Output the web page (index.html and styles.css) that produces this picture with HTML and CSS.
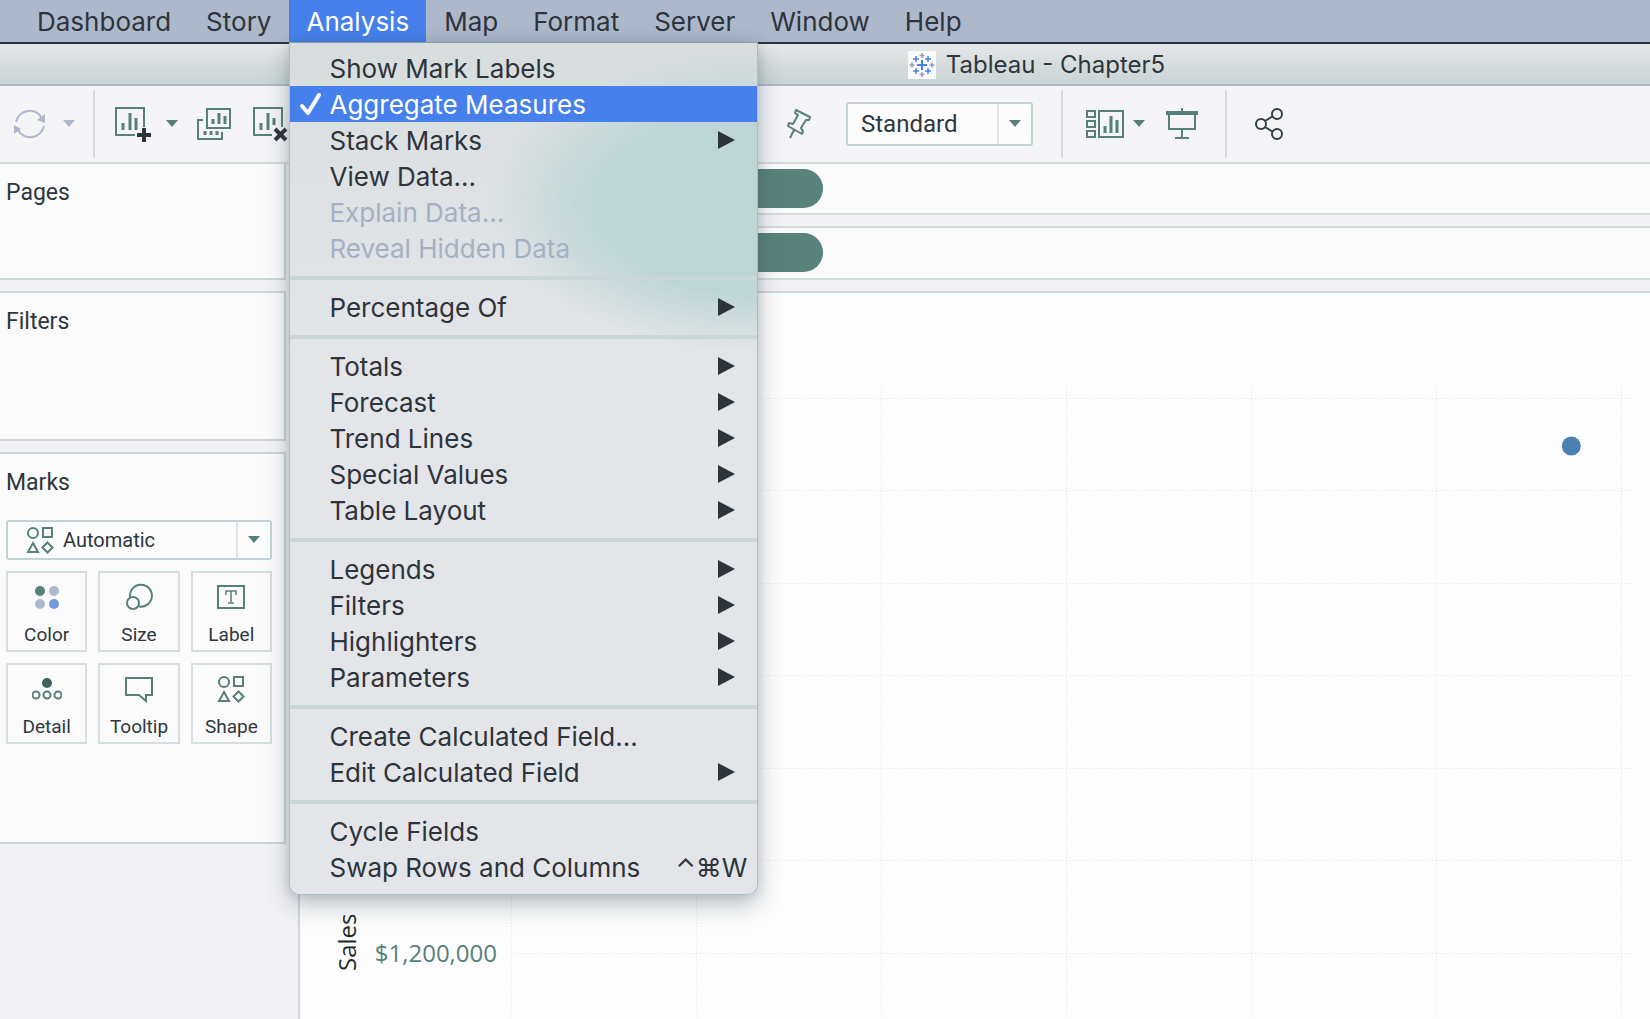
FILE: index.html
```html
<!DOCTYPE html>
<html lang="en">
<head>
<meta charset="utf-8">
<title>Tableau - Chapter5</title>
<link rel="stylesheet" href="styles.css">
</head>
<body>
<svg class="defs" aria-hidden="true">
  <symbol id="caret" viewBox="0 0 12 8"><path d="M0 0h12L6 7z" fill="currentColor"/></symbol>
  <symbol id="arrow" viewBox="0 0 18 18"><path d="M0 0l17 9-17 9z" fill="currentColor"/></symbol>
  <symbol id="shapes" viewBox="0 0 28 28">
    <g fill="none" stroke="currentColor" stroke-width="2">
      <circle cx="7" cy="7" r="5"/><rect x="17" y="2" width="9" height="9"/>
      <path d="M7 17l5 9H2z"/><path d="M21.500 16.500l5 5-5 5-5-5z"/>
    </g>
  </symbol>
</svg>

<nav class="menubar" aria-label="Application menu">
  <button class="menubar-item">Dashboard</button>
  <button class="menubar-item">Story</button>
  <div class="menubar-group">
    <button class="menubar-item is-open" aria-expanded="true">Analysis</button>
    <div class="menu" role="menu">
      <button class="menu-item" role="menuitem">Show Mark Labels</button>
      <button class="menu-item is-active" role="menuitemcheckbox" aria-checked="true"><svg class="check" viewBox="0 0 22 22" aria-hidden="true"><path d="M2 13l6 7L19 2" fill="none" stroke="currentColor" stroke-width="4" stroke-linecap="round" stroke-linejoin="round"/></svg>Aggregate Measures</button>
      <button class="menu-item" role="menuitem">Stack Marks<svg class="arrow"><use href="#arrow"/></svg></button>
      <button class="menu-item" role="menuitem">View Data...</button>
      <button class="menu-item" role="menuitem" disabled>Explain Data...</button>
      <button class="menu-item" role="menuitem" disabled>Reveal Hidden Data</button>
      <hr class="menu-rule">
      <button class="menu-item" role="menuitem">Percentage Of<svg class="arrow"><use href="#arrow"/></svg></button>
      <hr class="menu-rule">
      <button class="menu-item" role="menuitem">Totals<svg class="arrow"><use href="#arrow"/></svg></button>
      <button class="menu-item" role="menuitem">Forecast<svg class="arrow"><use href="#arrow"/></svg></button>
      <button class="menu-item" role="menuitem">Trend Lines<svg class="arrow"><use href="#arrow"/></svg></button>
      <button class="menu-item" role="menuitem">Special Values<svg class="arrow"><use href="#arrow"/></svg></button>
      <button class="menu-item" role="menuitem">Table Layout<svg class="arrow"><use href="#arrow"/></svg></button>
      <hr class="menu-rule">
      <button class="menu-item" role="menuitem">Legends<svg class="arrow"><use href="#arrow"/></svg></button>
      <button class="menu-item" role="menuitem">Filters<svg class="arrow"><use href="#arrow"/></svg></button>
      <button class="menu-item" role="menuitem">Highlighters<svg class="arrow"><use href="#arrow"/></svg></button>
      <button class="menu-item" role="menuitem">Parameters<svg class="arrow"><use href="#arrow"/></svg></button>
      <hr class="menu-rule">
      <button class="menu-item" role="menuitem">Create Calculated Field...</button>
      <button class="menu-item" role="menuitem">Edit Calculated Field<svg class="arrow"><use href="#arrow"/></svg></button>
      <hr class="menu-rule">
      <button class="menu-item" role="menuitem">Cycle Fields</button>
      <button class="menu-item" role="menuitem">Swap Rows and Columns<span class="shortcut">⌃⌘W</span></button>
    </div>
  </div>
  <button class="menubar-item">Map</button>
  <button class="menubar-item">Format</button>
  <button class="menubar-item">Server</button>
  <button class="menubar-item">Window</button>
  <button class="menubar-item">Help</button>
</nav>

<header class="titlebar">
  <svg class="logo" viewBox="0 0 28 28" aria-hidden="true">
    <rect width="28" height="28" fill="#fcfcfd"/>
    <g fill="none" stroke="#4680ee" stroke-width="2"><path d="M14 9v10M9 14h10"/><path d="M8 5v6M5 8h6M20 5v6M17 8h6M8 17v6M5 20h6M20 17v6M17 20h6" stroke-width="1.500"/></g>
    <path d="M14 2v5M11.500 4.500h5M14 21v5M11.500 23.500h5M4 11.500v5M1.500 14h5M24 11.500v5M21.500 14h5" fill="none" stroke="#8d9cb8" stroke-width="1.500"/>
  </svg>
  <h1 class="title">Tableau - Chapter5</h1>
</header>

<div class="toolbar" role="toolbar" aria-label="Worksheet">
  <div class="tools tools-sheet">
    <button class="tool tool-refresh is-muted" aria-label="Refresh">
      <svg width="34" height="34" viewBox="0 0 34 34"><g fill="none" stroke="currentColor" stroke-width="2"><path d="M3 15A14 14 0 0 1 29 11"/><path d="M31 19A14 14 0 0 1 5 23"/></g><path d="M32 7v9l-8-3zM1 27v-9l7 4z" fill="currentColor"/></svg>
    </button>
    <button class="tool tool-caret is-muted" aria-label="Refresh options"><svg width="12" height="8"><use href="#caret"/></svg></button>
    <span class="divider"></span>
    <button class="tool tool-new" aria-label="New worksheet">
      <svg width="38" height="36" viewBox="0 0 38 36"><path d="M21 29H2V2h28v19" fill="none" stroke="currentColor" stroke-width="2"/><path d="M9 24v-7M16 24V7M22 24V12" fill="none" stroke="currentColor" stroke-width="3"/><path d="M30 22v14M23 29h14" fill="none" stroke="#2e343c" stroke-width="4"/></svg>
    </button>
    <button class="tool tool-caret" aria-label="New options"><svg width="12" height="8"><use href="#caret"/></svg></button>
    <button class="tool tool-duplicate" aria-label="Duplicate">
      <svg width="36" height="34" viewBox="0 0 36 34"><g fill="none" stroke="currentColor"><path d="M11 2h23v19H11zM7 13H2v19h24v-7" stroke-width="2"/><path d="M17 17v-5M23 17V6M29 17V9" stroke-width="3"/><path d="M9 24v4M15 24v4M21 24v4" stroke-width="3"/></g></svg>
    </button>
    <button class="tool" aria-label="Clear sheet">
      <svg width="36" height="36" viewBox="0 0 36 36"><path d="M20 29H2V2h28v19" fill="none" stroke="currentColor" stroke-width="2"/><path d="M9 24v-7M16 24V7M22 19V12" fill="none" stroke="currentColor" stroke-width="3"/><path d="M23 23l11 11M34 23L23 34" fill="none" stroke="#2e343c" stroke-width="4"/></svg>
    </button>
  </div>
  <div class="tools">
    <button class="tool tool-pin" aria-label="Fix axes">
      <svg width="26" height="32" viewBox="0 0 26 32"><path d="M10 2l14 7-1 3h-3l-5 8 2 3-1 3L2 18l1-3 4 1 5-9-3-2zM8 22l-4 8" fill="none" stroke="currentColor" stroke-width="2" stroke-linejoin="round"/></svg>
    </button>
    <label class="picker picker-fit">
      <select class="picker-select" aria-label="Fit"><option>Standard</option></select>
      <span class="picker-arrow"><svg width="12" height="8"><use href="#caret"/></svg></span>
    </label>
    <span class="divider"></span>
    <button class="tool tool-cards" aria-label="Show cards">
      <svg width="38" height="30" viewBox="0 0 38 30"><g fill="none" stroke="currentColor"><path d="M1 2h8v6H1zM1 12h8v6H1zM1 22h8v6H1zM13 2h24v26H13z" stroke-width="2"/><path d="M19 24v-7M25 24V7M31 24V11" stroke-width="3"/></g></svg>
    </button>
    <button class="tool tool-caret" aria-label="Card options"><svg width="12" height="8"><use href="#caret"/></svg></button>
    <button class="tool tool-present" aria-label="Presentation mode">
      <svg width="34" height="32" viewBox="0 0 34 32"><g fill="none" stroke="currentColor"><path d="M17 0v4M4 6v15h26V6M17 21v9M10 30h14" stroke-width="2"/><path d="M1 5h32" stroke-width="4"/></g></svg>
    </button>
    <span class="divider"></span>
    <button class="tool tool-share" aria-label="Share">
      <svg width="28" height="32" viewBox="0 0 28 32"><g fill="none" stroke="#2d4146" stroke-width="2"><circle cx="6" cy="16" r="5"/><circle cx="22" cy="6" r="5"/><circle cx="22" cy="26" r="5"/><path d="M10 13l8-5M10 19l8 5"/></g></svg>
    </button>
  </div>
</div>

<main class="workspace">
  <aside class="sidebar">
    <section class="card card-pages"><h2 class="card-title">Pages</h2></section>
    <section class="card card-filters"><h2 class="card-title">Filters</h2></section>
    <section class="card card-marks">
      <h2 class="card-title">Marks</h2>
      <label class="picker picker-mark">
        <svg width="28" height="28" class="picker-icon"><use href="#shapes"/></svg>
        <select class="picker-select" aria-label="Mark type"><option>Automatic</option></select>
        <span class="picker-arrow"><svg width="12" height="8"><use href="#caret"/></svg></span>
      </label>
      <div class="marks">
        <button class="mark"><svg width="28" height="28" viewBox="0 0 28 28"><circle cx="7" cy="8" r="5" fill="#56817a"/><circle cx="21" cy="8" r="5" fill="#adb8cc"/><circle cx="7" cy="21" r="5" fill="#adb8cc"/><circle cx="21" cy="21" r="5" fill="#7398db"/></svg>Color</button>
        <button class="mark"><svg width="28" height="28" viewBox="0 0 28 28"><g fill="none" stroke="currentColor" stroke-width="2"><path d="M5 14A11 11 0 1 1 14 23.500"/><circle cx="8" cy="20" r="6"/></g></svg>Size</button>
        <button class="mark"><svg width="28" height="28" viewBox="0 0 28 28"><path d="M1 3h26v22H1z" fill="none" stroke="currentColor" stroke-width="2"/><path d="M9 12V8h10v4M14 8v12M11 20h6" fill="none" stroke="currentColor" stroke-width="1.500"/></svg>Label</button>
        <button class="mark"><svg width="30" height="28" viewBox="0 0 30 28"><circle cx="15" cy="8" r="5" fill="#3f625f"/><g fill="none" stroke="currentColor" stroke-width="2"><circle cx="4" cy="20" r="3.500"/><circle cx="15" cy="20" r="3.500"/><circle cx="26" cy="20" r="3.500"/></g></svg>Detail</button>
        <button class="mark"><svg width="28" height="28" viewBox="0 0 28 28"><path d="M1 3h26v17h-6v6l-7-6H1z" fill="none" stroke="currentColor" stroke-width="2"/></svg>Tooltip</button>
        <button class="mark"><svg width="28" height="28"><use href="#shapes"/></svg>Shape</button>
      </div>
    </section>
  </aside>

  <div class="canvas">
    <div class="shelf"><span class="pill"></span></div>
    <div class="shelf"><span class="pill"></span></div>
    <section class="sheet">
      <div class="axis">
        <span class="axis-title">Sales</span>
        <span class="axis-tick">$1,200,000</span>
      </div>
      <svg class="plot" role="img" aria-label="Scatter plot">
        <g class="gridlines">
          <line x1="0%" x2="0%" y1="0" y2="100%"/><line x1="16.500%" x2="16.500%" y1="0" y2="100%"/><line x1="33%" x2="33%" y1="0" y2="100%"/><line x1="49.500%" x2="49.500%" y1="0" y2="100%"/><line x1="66%" x2="66%" y1="0" y2="100%"/><line x1="82.500%" x2="82.500%" y1="0" y2="100%"/><line x1="99%" x2="99%" y1="0" y2="100%"/>
          <line x1="0" x2="100%" y1="12" y2="12"/><line x1="0" x2="100%" y1="104" y2="104"/><line x1="0" x2="100%" y1="197" y2="197"/><line x1="0" x2="100%" y1="289" y2="289"/><line x1="0" x2="100%" y1="382" y2="382"/><line x1="0" x2="100%" y1="474" y2="474"/><line x1="0" x2="100%" y1="567" y2="567"/>
        </g>
        <circle class="point" cx="94.500%" cy="60" r="9.500"/>
      </svg>
    </section>
  </div>
</main>
</body>
</html>
```
FILE: styles.css
```css
* { box-sizing: border-box; }

body {
  margin: 0;
  height: 100vh;
  overflow: hidden;
  display: flex;
  flex-direction: column;
  background: #f3f3f6;
  color: #2d373d;
  font-family: Roboto, "Liberation Sans", sans-serif;
}

button, select { font: inherit; color: inherit; background: none; border: 0; padding: 0; margin: 0; }
svg { display: block; flex: none; }
.defs { position: absolute; width: 0; height: 0; }

/* Menu bar */
.menubar {
  display: flex;
  gap: 1px;
  height: 44px;
  flex: none;
  padding-left: 20px;
  background: #adb8cb;
  border-bottom: 2px solid #2e323b;
  font-family: Inter, "Liberation Sans", sans-serif;
  font-size: 26px;
  color: #2e343c;
}
.menubar-item { height: 42px; padding: 0 17px; white-space: nowrap; }
.menubar-item.is-open { background: #4680ec; color: #fff; }
.menubar-group { position: relative; z-index: 5; }

/* Pull-down menu */
.menu {
  position: absolute;
  top: 42px;
  left: 0;
  width: 469px;
  padding: 7px 0 9px;
  border: 1px solid #abbccb;
  border-top: 1px solid #84a0a5;
  border-radius: 0 0 10px 10px;
  background:
    radial-gradient(ellipse 270px 150px at 100% 160px, #bdd5d5 0, #bdd5d5 58%, transparent 100%),
    linear-gradient(#d7dcdc, #dee1e3 120px, #e3e5e9 330px);
  box-shadow: 0 10px 24px rgba(60, 80, 95, .35), 0 0 12px rgba(60, 80, 95, .15);
}
.menu-item {
  display: flex;
  align-items: center;
  position: relative;
  width: 100%;
  height: 36px;
  padding: 0 10px 0 39px;
  text-align: left;
  white-space: nowrap;
}
.menu-item.is-active { background: #4680ec; color: #fff; }
.menu-item:disabled { color: #a4b1c5; }
.check { position: absolute; left: 10px; width: 22px; height: 22px; }
.arrow { width: 18px; height: 18px; margin: 0 11px 0 auto; }
.shortcut { margin-left: auto; }
.menu-rule { height: 4px; margin: 10px 0 9px; border: 0; background: #cbd6d8; }

/* Title bar */
.titlebar {
  display: flex;
  align-items: center;
  justify-content: center;
  gap: 10px;
  flex: none;
  height: 42px;
  padding: 2px 0 0 423px;
  background: linear-gradient(#e6e7ea, #d7dcdc 50%, #cad5d7);
  border-bottom: 2px solid #adb8cb;
}
.logo { width: 28px; height: 28px; }
.title {
  margin: 0;
  font: 400 24px/30px Inter, "Liberation Sans", sans-serif;
}

/* Toolbar */
.toolbar {
  display: flex;
  flex: none;
  height: 78px;
  background: #f5f5f8;
  border-bottom: 2px solid #d5dcdd;
  color: #56817a;
}
.tools { display: flex; align-items: center; height: 76px; }
.tools-sheet { width: 786px; padding-left: 13px; }
.divider { width: 2px; height: 68px; background: #d7dcdd; }
.is-muted { color: #adb8cb; }
.tool-caret { margin-right: 18px; }
.tool-refresh { margin-right: 16px; }
.tool-new { margin: 0 14px 0 19px; }
.tool-duplicate { margin-right: 20px; }
.tool-pin { margin-right: 34px; }
.tool-cards { margin: 0 9px 0 23px; }
.tool-present { margin: 0 26px 0 2px; }
.tool-share { margin-left: 28px; }

/* Drop-downs */
.picker {
  display: flex;
  align-items: stretch;
  background: #fcfcfd;
  border: 2px solid #c2d3d6;
  border-radius: 3px;
}
.picker-select { flex: 1; appearance: none; outline: 0; color: #2d373d; }
.picker-arrow {
  display: flex;
  align-items: center;
  justify-content: center;
  width: 34px;
  border-left: 2px solid #dfe3e7;
  color: #56817a;
  pointer-events: none;
}
.picker-fit { width: 187px; height: 44px; margin-right: 28px; font-size: 24px; }
.picker-fit .picker-select { padding-left: 13px; }
.picker-mark { height: 40px; font-size: 20px; }
.picker-icon { margin: 4px 9px 0 18px; color: #56817a; }

/* Sidebar */
.workspace { display: flex; flex: 1; min-height: 0; }
.sidebar { width: 298px; flex: none; padding-right: 12px; }
.card {
  margin-bottom: 11px;
  padding: 15px 12px 0 6px;
  background: #fbfbfc;
  border: solid #ccd7da;
  border-width: 2px 2px 2px 0;
}
.card-pages { height: 116px; border-top: 0; }
.card-filters { height: 150px; }
.card-marks { height: 392px; }
.card-title { margin: 0; font-size: 23px; line-height: 28px; font-weight: 400; }
.picker-mark { margin: 23px 0 11px; }
.marks { display: grid; grid-template-columns: repeat(3, 1fr); gap: 11px; }
.mark {
  display: flex;
  flex-direction: column;
  align-items: center;
  gap: 12px;
  height: 81px;
  padding-top: 10px;
  border: 2px solid #d5dfe0;
  font-size: 19px;
  line-height: 24px;
}
.mark svg { color: #56817a; }

/* Shelves */
.canvas { display: flex; flex-direction: column; flex: 1; min-width: 0; }
.shelf {
  height: 54px;
  flex: none;
  margin-bottom: 11px;
  padding: 5px 0;
  background: #fbfbfc;
  border: solid #d5dcdd;
  border-width: 2px 0 2px 2px;
}
.shelf:first-child { height: 51px; border-top: 0; }
.pill { display: block; width: 523px; height: 39px; border-radius: 20px; background: #59827a; }

/* Sheet */
.sheet {
  display: flex;
  flex: 1;
  min-height: 0;
  padding: 93px 17px 0 0;
  background: #fdfdfd;
  border: solid #ccd7da;
  border-width: 2px 0 0 2px;
  font-family: "Open Sans", "Noto Sans", sans-serif;
  font-size: 24px;
}
.axis {
  display: flex;
  justify-content: flex-end;
  gap: 12px;
  width: 211px;
  padding: 528px 14px 0 0;
  line-height: 32px;
  flex: none;
}
.axis-title { writing-mode: vertical-rl; transform: rotate(180deg); height: 57px; font-weight: 500; color: #20292c; }
.axis-tick { padding-top: 23px; color: #56817a; }
.plot { flex: 1; min-width: 0; height: 100%; }
.gridlines { stroke: #e3e5e9; stroke-width: 1; stroke-dasharray: 1 2; shape-rendering: crispEdges; }
.point { fill: #4a80b2; }
```
